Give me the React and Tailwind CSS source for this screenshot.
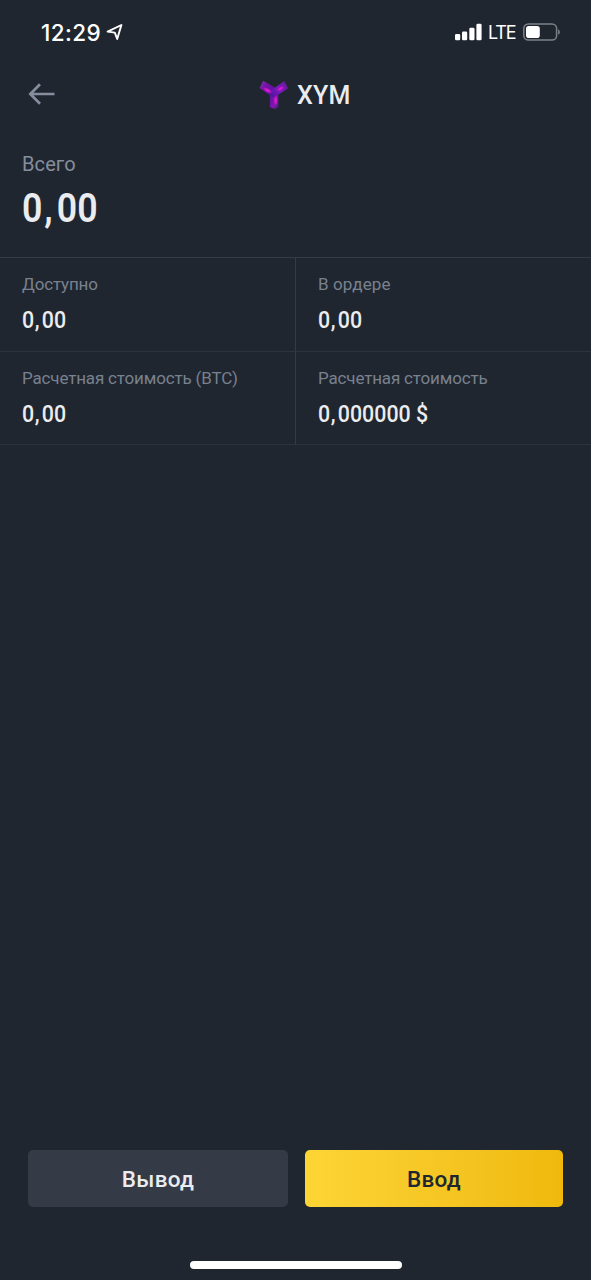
const cells = [
  { label: "Доступно", value: "0,00", labelCls: "tracking-[-0.15px]" },
  { label: "В ордере", value: "0,00", labelCls: "tracking-[0.1px]" },
  { label: "Расчетная стоимость (BTC)", value: "0,00", labelCls: "tracking-[-0.16px]" },
  { label: "Расчетная стоимость", value: "0,000000 $", labelCls: "tracking-[-0.16px]" },
];

// the decimal comma sits in a wider slot than the font gives it
function Amount({ value, big }) {
  const [whole, rest] = value.split(",");
  return (
    <span className={"inline-block origin-left whitespace-pre " + (big ? "scale-x-[0.87]" : "scale-x-[0.93]")}>
      {whole}
      <span className={big ? "ml-[2px] mr-[5px]" : "ml-[0.5px] mr-[2.5px]"}>,</span>
      {rest}
    </span>
  );
}

function StatusBar() {
  return (
    <div className="flex h-[65px] items-center justify-between pl-[41px] pr-[30px] text-white">
      <div className="flex items-center">
        <span className="font-['Inter'] text-[22.5px] font-medium leading-7 tracking-[0.4px]">12:29</span>
        <svg className="-mt-[2px] ml-[5px]" width="18" height="18" viewBox="0 0 18 18" fill="none" stroke="currentColor" strokeWidth="1.9" strokeLinejoin="round">
          <path d="M1.6 8.6 15.4 2 11.2 16 8.8 9.6Z" />
        </svg>
      </div>
      <div className="flex items-center">
        <svg className="-mt-px" width="27" height="18" viewBox="0 0 27 18" fill="currentColor">
          <rect x="0" y="11" width="5.2" height="6.3" rx="1.3" />
          <rect x="7" y="8.5" width="5.2" height="8.8" rx="1.3" />
          <rect x="14.3" y="4.7" width="5.2" height="12.6" rx="1.3" />
          <rect x="21.4" y="0.8" width="5.2" height="16.5" rx="1.3" />
        </svg>
        <span className="ml-[6px] mt-px w-[28px] font-['Inter'] text-[18px] leading-6 tracking-[-1.2px]">LTE</span>
        <svg className="-mt-px ml-[7px]" width="38" height="18" viewBox="0 0 38 18">
          <rect x="0.8" y="0.9" width="32.8" height="16.2" rx="4.6" fill="none" stroke="#7d8187" strokeWidth="1.5" />
          <rect x="3" y="3" width="13.8" height="12" rx="2.8" fill="#fff" />
          <path d="M35.2 6.2c2.2 1 2.2 4.6 0 5.6z" fill="#7d8187" />
        </svg>
      </div>
    </div>
  );
}

function Logo() {
  return (
    <svg width="30" height="30" viewBox="0 0 30 30">
      <defs>
        <linearGradient id="armL" x1="0" y1="0" x2="1" y2="0.6">
          <stop offset="0" stopColor="#7442a4" />
          <stop offset="0.35" stopColor="#7a12a8" />
          <stop offset="1" stopColor="#50129a" />
        </linearGradient>
        <linearGradient id="armR" x1="1" y1="0" x2="0" y2="1">
          <stop offset="0" stopColor="#5f1a94" />
          <stop offset="0.5" stopColor="#7d1bbd" />
          <stop offset="1" stopColor="#4c139b" />
        </linearGradient>
        <linearGradient id="stem" x1="0" y1="0" x2="1" y2="0.5">
          <stop offset="0" stopColor="#4a1890" />
          <stop offset="0.6" stopColor="#8a14b4" />
          <stop offset="1" stopColor="#55208a" />
        </linearGradient>
        <radialGradient id="glow">
          <stop offset="0" stopColor="#f01ad6" />
          <stop offset="0.5" stopColor="#dc16cc" stopOpacity="0.8" />
          <stop offset="1" stopColor="#a010b8" stopOpacity="0" />
        </radialGradient>
      </defs>
      <path d="M10.8 14.5h8.6v12.2l-3.2 2.4-5.4-1.8z" fill="url(#stem)" />
      <path d="M4.2.8 17 8.2l1.8 6.3-5 2.7L.6 8z" fill="url(#armL)" />
      <path d="M25.3 1 29 8.2 19.6 14.4 13.8 17.2 11.2 11z" fill="url(#armR)" />
      <ellipse cx="8.5" cy="10.3" rx="5.6" ry="2.4" transform="rotate(28 8.5 10.3)" fill="url(#glow)" />
      <ellipse cx="21.5" cy="8.6" rx="4.6" ry="2" transform="rotate(-32 21.5 8.6)" fill="url(#glow)" />
      <ellipse cx="16.8" cy="20.5" rx="2.2" ry="6" fill="url(#glow)" />
    </svg>
  );
}

export default function App() {
  return (
    <main className="flex h-[1280px] w-full flex-col overflow-hidden bg-[#202630] font-['Roboto',sans-serif] text-[#eaecef]">
      <StatusBar />

      <header className="grid h-[60px] grid-cols-[259px_auto_1fr] items-center">
        <svg className="ml-[28px]" width="28" height="24" viewBox="0 0 28 24" fill="none" stroke="#848e9c" strokeWidth="2.7">
          <path d="M26.5 11H2.5M12 1.3 2.3 11 12 20.7" />
        </svg>
        <div className="flex items-center gap-[8px]">
          <Logo />
          <h1 className="mt-[2px] text-[25px] font-medium leading-8 tracking-[0.2px]">XYM</h1>
        </div>
      </header>

      <section className="h-[132px] px-[22px] pt-[27px]">
        <p className="text-[20px] leading-6 tracking-[0.1px] text-[#848e9c]">Всего</p>
        <p className="mt-[8px] text-[41px] font-semibold leading-[48px]"><Amount value="0,00" big /></p>
      </section>

      <section className="grid grid-cols-[296px_1fr] border-t border-[#333b47]">
        {cells.map((c, i) => (
          <div key={i} className="h-[93.5px] border-b border-[#2b333e] pl-[22px] pt-[14px] odd:border-r odd:border-r-[#333b47]">
            <p className={"whitespace-nowrap text-[17px] leading-6 text-[#78818e] " + c.labelCls}>{c.label}</p>
            <p className="mt-[10px] text-[23px] font-medium leading-[30px]"><Amount value={c.value} /></p>
          </div>
        ))}
      </section>

      <div className="mt-auto flex gap-[17px] pl-[28px] pr-[28px] text-[22.5px] font-medium">
        <button className="h-[57px] w-[260px] rounded-[5px] bg-[#353a47] pt-[2px] tracking-[0.3px]">Вывод</button>
        <button className="h-[57px] w-[258px] rounded-[5px] bg-linear-to-r from-[#fcd535] to-[#f0b90b] pt-[2px] tracking-[0.3px] text-[#202630]">Ввод</button>
      </div>
      <div className="mx-auto mb-[11px] mt-[54px] h-[8px] w-[212px] shrink-0 rounded-full bg-white" />
    </main>
  );
}
